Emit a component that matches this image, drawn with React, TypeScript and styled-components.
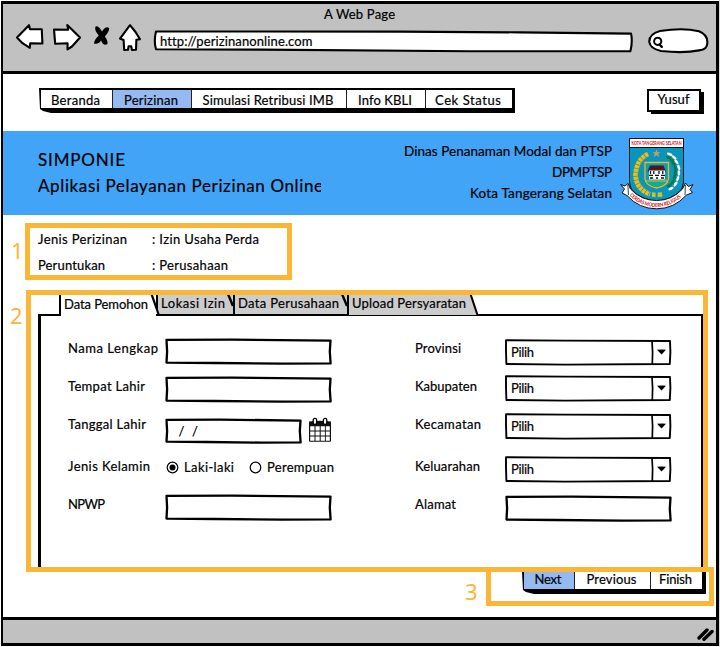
import React, { useLayoutEffect, useRef, useState } from 'react';
import styled, { createGlobalStyle } from 'styled-components';

const ORANGE = '#fab637';
const BLUE = '#95baf1';
const GREY = '#c1c1c1';

const GlobalStyle = createGlobalStyle`
  * { box-sizing: border-box; }
  body { margin: 0; background: #fff; }
  svg { display: block; }
`;

/* ---------- text ---------- */

const Ink = styled.span<{ $size: number }>`
  display: inline-block;
  justify-self: start;
  font-size: ${(p) => p.$size}px;
  white-space: pre;
  flex: none;
`;

/** Text whose tracking is adjusted so that it spans the given width. */
function Fit({ w, size = 13, children }: { w: number; size?: number; children: string }) {
  const ref = useRef<HTMLSpanElement>(null);
  const [track, setTrack] = useState(0);
  useLayoutEffect(() => {
    if (ref.current) {
      const natural = ref.current.getBoundingClientRect().width;
      setTrack((w - natural) / Math.max(1, children.length - 1));
    }
  }, [w, children]);
  return (
    <Ink ref={ref} $size={size} style={{ letterSpacing: track, marginRight: -track }}>
      {children}
    </Ink>
  );
}

/* ---------- window ---------- */

const Page = styled.div`
  width: 720px;
  height: 647px;
  padding: 1px;
  overflow: hidden;
  background: linear-gradient(#d8d8d8, #d8d8d8) right / 1px 100% no-repeat, #fff;
  color: #000;
  font-family: Lato, 'Open Sans', sans-serif;
  -webkit-text-stroke: 0.2px #000;
`;

const Frame = styled.div`
  display: flex;
  flex-direction: column;
  height: 645px;
  border: solid #000;
  border-width: 3px 3px 3px 2px;
`;

const Chrome = styled.header`
  height: 70px;
  flex: none;
  background: ${GREY};
  border-bottom: 3px solid #000;
`;

const WindowTitle = styled.div`
  height: 20px;
  line-height: 18px;
  padding-left: 321px;
`;

const Toolbar = styled.div`
  display: flex;
  align-items: flex-start;
  padding-left: 12px;
`;

const Tool = styled.div<{ $w: number; $gap: number }>`
  width: ${(p) => p.$w}px;
  margin: -1px ${(p) => p.$gap}px 0 0;
  flex: none;
`;

const UrlBar = styled.div`
  position: relative;
  width: 480px;
  height: 23px;
  margin: 6px 14px 0 0;
  padding-left: 7px;
  line-height: 20px;
`;

const SearchBox = styled.div`
  width: 62px;
  margin-top: 3px;
`;

const Backdrop = styled.svg`
  position: absolute;
  inset: 0;
  width: 100%;
  height: 100%;
  overflow: visible;
`;

const Over = styled.span`
  position: relative;
`;

const Body = styled.main`
  flex: 1;
  min-height: 0;
  background: #fff;
`;

const Footer = styled.footer`
  display: flex;
  justify-content: flex-end;
  height: 26px;
  flex: none;
  padding: 7px 2px 0 0;
  background: ${GREY};
  border-top: 3px solid #000;
`;

/* ---------- buttons ---------- */

const NavRow = styled.div`
  display: flex;
  justify-content: space-between;
  padding: 14px 12px 0 36px;
  height: 57px;
`;

const Bar = styled.div<{ $h: number; $open?: boolean }>`
  display: flex;
  height: ${(p) => p.$h}px;
  line-height: ${(p) => (p.$open ? 15 : 20)}px;
  background: #000;
  padding: ${(p) => (p.$open ? '0 4px 5px 2px' : '2px 3px 5px 2px')};
  clip-path: polygon(0 0, 100% 0, 100% 100%, 12px 100%, 4px calc(100% - 2px), 1px calc(100% - 4px));
`;

const Cell = styled.div<{ $w: number; $active?: boolean }>`
  display: flex;
  justify-content: center;
  width: ${(p) => p.$w}px;
  padding-right: 2px;
  background: ${(p) => (p.$active ? BLUE : '#fff')};
  & + & { border-left: 1.5px solid #222; }
`;

const UserButton = styled.button`
  width: 54px;
  height: 23px;
  margin: 1px 3px 0 0;
  padding: 0;
  font: inherit;
  line-height: 17px;
  color: inherit;
  text-align: center;
  background: #fff;
  border: 2px solid #000;
  box-shadow: 3px 2px 0 0 #000;
  clip-path: polygon(0 0, 54px 0, 54px 3px, 57px 3px, 57px 26px, 4px 26px, 4px 23px, 0 23px);
`;

const ButtonTop = styled.div`
  display: flex;
  justify-content: center;
  height: 19px;
  padding-right: 1px;
`;

const Wizard = styled.div`
  display: flex;
  padding-left: 31px;
`;

/* ---------- banner ---------- */

const Banner = styled.section`
  display: flex;
  height: 84px;
  padding-left: 35px;
  background: #42a4f6;
`;

const BannerTitle = styled.div`
  width: 283px;
  height: 60px;
  margin-top: 16px;
  overflow: hidden;
  line-height: 26px;
`;

const BannerOffice = styled.div`
  display: flex;
  flex-direction: column;
  align-items: flex-end;
  width: 291px;
  margin: 10px 7px 0 0;
  line-height: 21px;
`;

const Crest = styled.div`
  width: 76px;
  padding-top: 6px;
`;

/* ---------- annotated areas ---------- */

const Annotated = styled.section<{ $top: number; $left: number }>`
  display: flex;
  margin: ${(p) => p.$top}px 0 0 ${(p) => p.$left}px;
`;

const Marker = styled.div<{ $w: number; $top: number }>`
  width: ${(p) => p.$w}px;
  padding-top: ${(p) => p.$top}px;
  font: 22px/22px 'Noto Sans', sans-serif;
  -webkit-text-stroke: 0;
  color: ${ORANGE};
`;

const Outline = styled.div<{ $w: number; $h: number }>`
  width: ${(p) => p.$w}px;
  height: ${(p) => p.$h}px;
  border: 5px solid ${ORANGE};
`;

const Facts = styled.dl`
  display: grid;
  grid-template-columns: 114px 1fr;
  grid-auto-rows: 20px;
  row-gap: 6px;
  margin: 0;
  padding-left: 8px;
  line-height: 19px;
`;
const Term = styled.dt``;
const Value = styled.dd`
  margin: 0;
`;

/* ---------- tabs & form ---------- */

const TabStrip = styled.div`
  display: flex;
  height: 19px;
  padding-left: 28px;
`;

const Tab = styled.div<{ $w: number; $active?: boolean; $last?: boolean }>`
  position: relative;
  width: ${(p) => p.$w}px;
  height: ${(p) => (p.$active ? 22 : 19)}px;
  padding-left: 3px;
  line-height: ${(p) => (p.$active ? 16 : 13)}px;
  background: ${(p) => (p.$active ? '#fff' : p.$last ? 'none' : '#ccc')};
  border-left: 2px solid #000;
  z-index: ${(p) => (p.$active ? 2 : 1)};
`;

const TabFoot = styled.span`
  position: absolute;
  left: -2px;
  bottom: 0;
  width: 2px;
  height: 1px;
  background: #fff;
`;

const TabEdge = styled.svg`
  position: absolute;
  top: 0;
  right: -5px;
`;

const LastTabFill = styled.svg`
  position: absolute;
  left: 0;
  top: 0;
`;

const Panel = styled.form`
  display: grid;
  grid-template-columns: 347px 1fr;
  height: 253px;
  margin-left: 7px;
  padding: 20px 0 0 27px;
  border: solid #000;
  border-width: 2px 2px 0 3px;
`;

const Column = styled.div`
  display: grid;
  grid-template-rows: 38px 38px 42px 38px 32px;
  align-content: start;
`;

const Field = styled.div<{ $label: number }>`
  display: grid;
  grid-template-columns: ${(p) => p.$label}px 1fr;
  line-height: 24px;
`;

const Control = styled.div<{ $w: number; $top: number }>`
  position: relative;
  display: flex;
  width: ${(p) => p.$w}px;
  height: 27px;
  margin-top: ${(p) => p.$top}px;
  padding-left: 6px;
`;

const DateRow = styled.div`
  display: flex;
  gap: 6px;
`;

const DateIcon = styled.div`
  padding-top: 5px;
`;

const RadioRow = styled.div`
  display: flex;
  align-items: center;
  height: 26px;
`;

const RadioItem = styled.label<{ $gap: number }>`
  display: flex;
  align-items: center;
  gap: 5px;
  margin: 0 ${(p) => p.$gap}px 0 1px;
`;

/* ---------- drawings ---------- */

const BoxLines = ({ w, h = 27 }: { w: number; h?: number }) => (
  <Backdrop viewBox={`0 0 ${w} 27`} aria-hidden>
    <path
      d={`M1.5 1.8 L${w * 0.4} 1.6 L${w - 1.5} 2.6 L${w - 2.2} ${h * 0.5} L${w - 1.4} ${h - 1.6} L${w * 0.7} ${h - 1.4} L${w * 0.3} ${h - 2} L1.5 ${h - 2.4} L2.1 ${h * 0.5} Z`}
      fill="#fff" stroke="#000" strokeWidth="2.3" strokeLinejoin="round"
    />
  </Backdrop>
);

const SelectLines = () => (
  <Backdrop viewBox="0 0 166 27" aria-hidden>
    <path d="M1 1.2 L60 1.6 L165 2 L165.4 13 L164.8 25 L60 25.6 L1.4 25 L1 12 Z" fill="#fff" stroke="#000" strokeWidth="1.9" strokeLinejoin="round" />
    <path d="M147 2 L147.6 13 L147.3 25" stroke="#000" strokeWidth="1.7" fill="none" />
    <path d="M152 10.8 Q156.5 10.1 161 10.7 L156.6 15.5 Z" fill="#000" />
  </Backdrop>
);

const Radio = ({ on }: { on?: boolean }) => (
  <svg width="13" height="13" viewBox="0 0 13 13">
    <circle cx="6.5" cy="6.5" r="5.3" fill="#fff" stroke="#000" strokeWidth="1.2" />
    {on && <circle cx="6.5" cy="6.5" r="3" />}
  </svg>
);

const Calendar = () => (
  <svg width="24" height="26" viewBox="0 0 24 26">
    <path d="M1 4.5 Q12 3 23 4.5 V24 Q23 24.8 22 24.8 H2 Q1 24.8 1 24 Z" fill="#111" />
    <path d="M2.2 9.2h4.3v4.2h-4.3zM7.5 9.2h4.2v4.2h-4.2zM12.7 9.2h4.2v4.2h-4.2zM17.8 9.2h4v4.2h-4zM2.2 14.4h4.3v4.2h-4.3zM7.5 14.4h4.2v4.2h-4.2zM12.7 14.4h4.2v4.2h-4.2zM17.8 14.4h4v4.2h-4zM2.2 19.6h4.3v4.1h-4.3zM7.5 19.6h4.2v4.1h-4.2zM12.7 19.6h4.2v4.1h-4.2zM17.8 19.6h4v4.1h-4z" fill="#fff" />
    <rect x="5.2" y="1.4" width="3.4" height="6" rx="1.6" fill="#fff" stroke="#000" strokeWidth="1.3" />
    <rect x="15.4" y="1.4" width="3.4" height="6" rx="1.6" fill="#fff" stroke="#000" strokeWidth="1.3" />
  </svg>
);

const pen = { fill: '#fff', stroke: '#000', strokeWidth: 2.1, strokeLinejoin: 'round' as const };

const BackIcon = () => (
  <svg width="29" height="28" viewBox="15 23 29 28"><path d="M17 37.5 L29 25.2 L30 29.3 L41.8 29.2 L42.4 43.5 L30.2 43.2 L29.8 47.8 L22.5 43.2 Z" {...pen} /></svg>
);
const ForwardIcon = () => (
  <svg width="30" height="28" viewBox="52 23 30 28"><path d="M80 37.5 L67.3 25 L68.2 29.8 L54 29.5 L55.2 43.8 L67.6 43.2 L67.5 49.4 L72 46.5 Z" {...pen} /></svg>
);
const StopIcon = () => (
  <svg width="18" height="28" viewBox="93 23 18 28">
    <path d="M95.5 26.5 Q98.5 25.5 102 31.5 Q106 25.5 109.3 28.2 Q109 32 104.8 36.5 Q108 40.5 107.5 44 Q103.5 46.5 101 40.5 Q98.5 44.5 94 43.5 Q94 40 98.8 35.5 Q94 30 95.5 26.5 Z" fill="#000" />
  </svg>
);
const HomeIcon = () => (
  <svg width="24" height="30" viewBox="118 22 24 30"><path d="M130 24.2 L120 37.6 L123.6 39 L124.2 49 L128 48.8 L128.6 45.3 L131.2 45.3 L132 49 L136 48.7 L136.4 38.8 L140 38.2 L135.5 31 Z" {...pen} /></svg>
);
const SearchShape = () => (
  <svg width="62" height="27" viewBox="646 27 62 27">
    <path d="M659 31 Q682 27.5 698 31.3 Q707 35 706.3 43 Q706.5 49.5 698 50.4 Q683 53.5 660 51 Q649 48.5 648.3 42 Q648 34 659 31 Z" {...pen} />
    <circle cx="656.7" cy="41.3" r="3.6" fill="none" stroke="#000" strokeWidth="2" />
    <path d="M658.5 44.5 L660.8 46.8" stroke="#000" strokeWidth="2.4" strokeLinecap="round" />
  </svg>
);
const UrlShape = () => (
  <Backdrop viewBox="153 30 480 23" aria-hidden>
    <path d="M156 31.5 L400 31.6 L520 32.4 L631 33.6 Q632.8 41 630.4 51.3 L470 51.3 L260 49.6 L156 49.3 Q153.6 41 156 31.5 Z" {...pen} />
  </Backdrop>
);
const Grip = () => (
  <svg width="18" height="15" viewBox="697 627 18 15"><path d="M700 638 L708 630 M705 639.2 L713 631.5" stroke="#000" strokeWidth="3.4" strokeLinecap="round" /></svg>
);

const leaves = [
  [52, 25, 20], [56, 28, 35], [58, 32, 50], [60, 37, 70], [60, 42, 90], [59, 47, 110], [57, 52, 125], [53, 56, 150],
];

const CrestDrawing = () => (
  <svg width="76" height="74" viewBox="0 0 76 74">
    <path d="M10.5 1.5 H64.5 V46 Q64 59 37.5 65 Q11 59 10.5 46 Z" fill="#0a95bd" stroke="#111" />
    <rect x="10.5" y="1.5" width="54" height="9" fill="#fff" stroke="#111" />
    <text x="12.5" y="8.4" textLength="50" lengthAdjust="spacingAndGlyphs" fontSize="6.4" fontWeight="900" fill="#e01b1b" strokeWidth="0">KOTA TANGERANG SELATAN</text>
    <path d="M37.5 12.5 l1.1 2.7 2.9.1 -2.3 1.8 .9 2.8 -2.6-1.6 -2.6 1.6 .9-2.8 -2.3-1.8 2.9-.1z" fill="#c99a6b" />
    <path d="M29 17 Q17 23 16.5 38 Q17 52 31 57.5" fill="none" stroke="#f5bd12" strokeWidth="4.6" strokeDasharray="3.2 .7" />
    <path d="M28 19 Q19 26 18.5 38 Q19 49 31 55" fill="none" stroke="#9cae3c" strokeWidth=".8" />
    {leaves.map(([x, y, r], i) => (
      <g key={i} transform={`translate(${x - 2} ${y - 6}) rotate(${r})`}>
        <ellipse cx="0" cy="-1.9" rx="2.9" ry="1.3" fill="#fff" />
        <ellipse cx="0" cy="1.7" rx="2.9" ry="1.6" fill="#087a4c" />
      </g>
    ))}
    <path d="M26 25.5 H49.5 V42 Q48 49 37.7 51 Q27 49 26 42 Z" fill="#0d9cba" stroke="#f2b61a" strokeWidth="1.3" />
    <path d="M27 43 Q37 39 48.8 43 Q46 48.5 37.7 50 Q29 48 27 43 Z" fill="#12ab96" />
    <path d="M26 44 H49" stroke="#f2b61a" strokeWidth="1" />
    <path d="M28.5 34.5 L31 28.5 H44.5 L47 34.5 Z" fill="#4b1820" />
    <rect x="30" y="33.5" width="16" height="9" fill="#fff" />
    <path d="M31.5 34v3M34.8 34v3M40 34v3M43.8 34v3M30 38.3h4M36 38.3h4M42 38.3h4M31 41h3M37 41h2M42 41h3" stroke="#111" strokeWidth="1.3" />
    <path d="M33 56.5h3.4M38.8 56.5h4.2M33 58.7h3.6M38.6 58.7h4.6" stroke="#f2c412" strokeWidth="2" />
    <path d="M1.5 47.5 L6 49 L9 46.5 L11.5 52 Q22 63.5 37.5 63.5 Q53 63.5 63.5 52 L66.5 46 L69.5 49.5 L74 47.5 L71 52.5 L73.5 55.5 L67.5 58 Q55 71.8 37.5 71.8 Q20 71.8 8 58.5 L3 56 L5.5 52 Z" fill="#fff" stroke="#111" />
    <path d="M8.8 48 L9.5 58 M66.4 48 L66 58" stroke="#111" strokeWidth=".8" />
    <path id="motto" d="M10.5 58.5 Q22 69.8 37.5 70 Q53 69.8 65 57.8" fill="none" />
    <text fontSize="5.4" fontWeight="900" fill="#dc1c1c" strokeWidth="0">
      <textPath href="#motto" textLength="57" lengthAdjust="spacingAndGlyphs">CERDAS MODERN RELIGIUS</textPath>
    </text>
  </svg>
);

const Slant = () => (
  <TabEdge width="11" height="12" viewBox="0 0 11 12"><path d="M1 -1 L6 11" stroke="#000" strokeWidth="2.4" /></TabEdge>
);

/* ---------- composed parts ---------- */

function TextField({ label, lw, top }: { label: string; lw: number; top: number }) {
  return (
    <Field $label={97}>
      <Fit w={lw}>{label}</Fit>
      <Control $w={167} $top={top}><BoxLines w={167} /></Control>
    </Field>
  );
}

function SelectField({ label, lw, top }: { label: string; lw: number; top: number }) {
  return (
    <Field $label={90}>
      <Fit w={lw}>{label}</Fit>
      <Control $w={166} $top={top}>
        <SelectLines />
        <Over><Fit w={23}>Pilih</Fit></Over>
      </Control>
    </Field>
  );
}

export default function App() {
  return (
    <Page>
      <GlobalStyle />
      <Frame>
        <Chrome>
          <WindowTitle><Fit w={71}>A Web Page</Fit></WindowTitle>
          <Toolbar>
            <Tool $w={29} $gap={8}><BackIcon /></Tool>
            <Tool $w={30} $gap={11}><ForwardIcon /></Tool>
            <Tool $w={18} $gap={7}><StopIcon /></Tool>
            <Tool $w={24} $gap={11}><HomeIcon /></Tool>
            <UrlBar><UrlShape /><Over><Fit w={152}>http://perizinanonline.com</Fit></Over></UrlBar>
            <SearchBox><SearchShape /></SearchBox>
          </Toolbar>
        </Chrome>

        <Body>
          <NavRow>
            <Bar $h={25}>
              <Cell $w={71}><Fit w={49}>Beranda</Fit></Cell>
              <Cell $w={79} $active><Fit w={54}>Perizinan</Fit></Cell>
              <Cell $w={155}><Fit w={131}>Simulasi Retribusi IMB</Fit></Cell>
              <Cell $w={79}><Fit w={54}>Info KBLI</Fit></Cell>
              <Cell $w={87}><Fit w={66}>Cek Status</Fit></Cell>
            </Bar>
            <UserButton type="button"><ButtonTop><Fit w={32}>Yusuf</Fit></ButtonTop></UserButton>
          </NavRow>

          <Banner>
            <BannerTitle>
              <Fit w={87} size={17}>SIMPONIE</Fit>
              <Fit w={285} size={17}>Aplikasi Pelayanan Perizinan Online</Fit>
            </BannerTitle>
            <BannerOffice>
              <Fit w={208} size={13.5}>Dinas Penanaman Modal dan PTSP</Fit>
              <Fit w={60} size={13.5}>DPMPTSP</Fit>
              <Fit w={142} size={13.5}>Kota Tangerang Selatan</Fit>
            </BannerOffice>
            <Crest><CrestDrawing /></Crest>
          </Banner>

          <Annotated $top={8} $left={8}>
            <Marker $w={14} $top={16}>1</Marker>
            <Outline $w={267} $h={57}>
              <Facts>
                <Term><Fit w={89}>Jenis Perizinan</Fit></Term>
                <Value><Fit w={107}>: Izin Usaha Perda</Fit></Value>
                <Term><Fit w={67}>Peruntukan</Fit></Term>
                <Value><Fit w={76}>: Perusahaan</Fit></Value>
              </Facts>
            </Outline>
          </Annotated>

          <Annotated $top={10} $left={7}>
            <Marker $w={16} $top={14}>2</Marker>
            <Outline $w={682} $h={282}>
              <TabStrip>
                <Tab $w={97} $active>
                  <Fit w={84}>Data Pemohon</Fit>
                  <TabFoot />
                  <TabEdge width="11" height="21" viewBox="0 0 11 21">
                    <path d="M2 0 L8.5 19 H0 V0Z" fill="#fff" />
                    <path d="M1.5 -1 L8.6 19.5" stroke="#000" strokeWidth="2.2" />
                  </TabEdge>
                </Tab>
                <Tab $w={77}><Fit w={64}>Lokasi Izin</Fit><Slant /></Tab>
                <Tab $w={114}><Fit w={101}>Data Perusahaan</Fit><Slant /></Tab>
                <Tab $w={131} $last>
                  <LastTabFill width="131" height="20" viewBox="0 0 131 20">
                    <path d="M0 0 H122 L128.5 20 H0 Z" fill="#ccc" />
                    <path d="M121.5 -1 L128.5 20" stroke="#000" strokeWidth="2" />
                  </LastTabFill>
                  <Over><Fit w={114}>Upload Persyaratan</Fit></Over>
                </Tab>
              </TabStrip>
              <Panel>
                <Column>
                  <TextField label="Nama Lengkap" lw={90} top={2} />
                  <TextField label="Tempat Lahir" lw={77} top={2} />
                  <Field $label={97}>
                    <Fit w={78}>Tanggal Lahir</Fit>
                    <DateRow>
                      <Control $w={137} $top={6}>
                        <BoxLines w={137} h={26} />
                        <Over><Fit w={27}>{'  /  /'}</Fit></Over>
                      </Control>
                      <DateIcon><Calendar /></DateIcon>
                    </DateRow>
                  </Field>
                  <Field $label={97}>
                    <Fit w={82}>Jenis Kelamin</Fit>
                    <RadioRow>
                      <RadioItem $gap={14}><Radio on /><Fit w={50}>Laki-laki</Fit></RadioItem>
                      <RadioItem $gap={0}><Radio /><Fit w={67}>Perempuan</Fit></RadioItem>
                    </RadioRow>
                  </Field>
                  <TextField label="NPWP" lw={37} top={2} />
                </Column>
                <Column>
                  <SelectField label="Provinsi" lw={46} top={3} />
                  <SelectField label="Kabupaten" lw={62} top={1} />
                  <SelectField label="Kecamatan" lw={66} top={1} />
                  <SelectField label="Keluarahan" lw={65} top={2} />
                  <Field $label={90}>
                    <Fit w={41}>Alamat</Fit>
                    <Control $w={167} $top={3}><BoxLines w={167} /></Control>
                  </Field>
                </Column>
              </Panel>
            </Outline>
          </Annotated>

          <Annotated $top={-5} $left={462}>
            <Marker $w={21} $top={13}>3</Marker>
            <Outline $w={228} $h={39}>
              <Wizard>
                <Bar $h={22} $open>
                  <Cell $w={50} $active><Fit w={27}>Next</Fit></Cell>
                  <Cell $w={76}><Fit w={50}>Previous</Fit></Cell>
                  <Cell $w={52}><Fit w={33}>Finish</Fit></Cell>
                </Bar>
              </Wizard>
            </Outline>
          </Annotated>
        </Body>

        <Footer><Grip /></Footer>
      </Frame>
    </Page>
  );
}
